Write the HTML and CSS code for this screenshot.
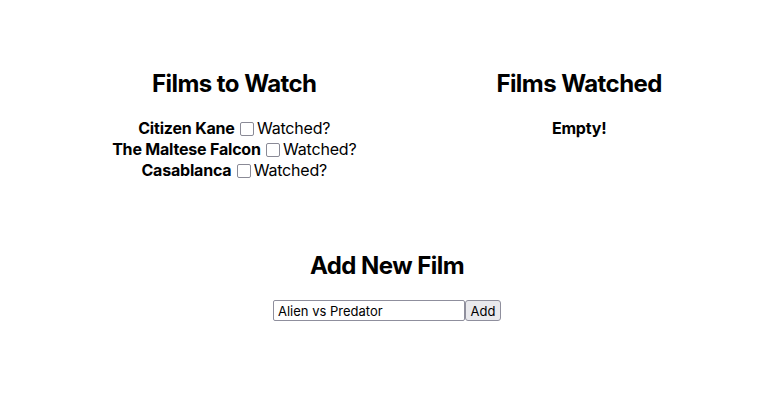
FILE: index.html
```html
<!DOCTYPE html>
<html>
<head>
<meta charset="utf-8">
<link rel="stylesheet" href="styles.css">
</head>
<body>
<div class="app">
  <div class="columns">
    <section class="col">
      <h2 class="title">Films to Watch</h2>
      <div class="list">
        <div class="film"><strong>Citizen Kane</strong> <label><input type="checkbox" class="check">Watched?</label></div>
        <div class="film"><strong>The Maltese Falcon</strong> <label><input type="checkbox" class="check">Watched?</label></div>
        <div class="film"><strong>Casablanca</strong> <label><input type="checkbox" class="check">Watched?</label></div>
      </div>
    </section>
    <section class="col">
      <h2 class="title">Films Watched</h2>
      <div class="list">
        <div class="film"><strong>Empty!</strong></div>
      </div>
    </section>
  </div>
  <section class="add">
    <h2 class="title">Add New Film</h2>
    <form class="form">
      <input type="text" class="field" value="Alien vs Predator"><button type="button" class="btn">Add</button>
    </form>
  </section>
</div>
</body>
</html>
```
FILE: styles.css
```css
html, body {
  margin: 0;
  padding: 0;
  background: #fff;
}
body {
  font-family: Inter, "Noto Sans", sans-serif;
  font-size: 16px;
  color: #000;
}
.app {
  padding-top: 66px;
}
.columns {
  display: flex;
  justify-content: center;
  gap: 140px;
}
.col {
  text-align: center;
}
.title {
  font-size: 24px;
  font-weight: 700;
  margin: 0;
  line-height: 36px;
  letter-spacing: -0.55px;
}
.list {
  margin-top: 16px;
  letter-spacing: -0.2px;
}
.film {
  line-height: 21px;
}
.film strong {
  font-weight: 700;
}
.check {
  appearance: none;
  -webkit-appearance: none;
  box-sizing: border-box;
  width: 14px;
  height: 14px;
  border: 1.5px solid #8a8a96;
  border-radius: 2px;
  background: #fff;
  margin: 0 3px 0 1px;
  vertical-align: -2px;
}
.add {
  text-align: center;
  margin-top: 67px;
}
.form {
  margin-top: 15px;
}
.field {
  font-family: Inter, "Noto Sans", sans-serif;
  font-size: 13px;
  width: 192px;
  height: 21px;
  box-sizing: border-box;
  padding: 1px 4px;
  border: 1px solid #8f8f9d;
  border-radius: 2px;
  margin: 0;
  vertical-align: middle;
}
.btn {
  font-family: Inter, "Noto Sans", sans-serif;
  font-size: 13px;
  height: 21px;
  width: 36px;
  box-sizing: border-box;
  padding: 0 4px;
  border: 1px solid #8f8f9d;
  border-radius: 3px;
  background: #e9e9ed;
  margin: 0;
  vertical-align: middle;
}
```
